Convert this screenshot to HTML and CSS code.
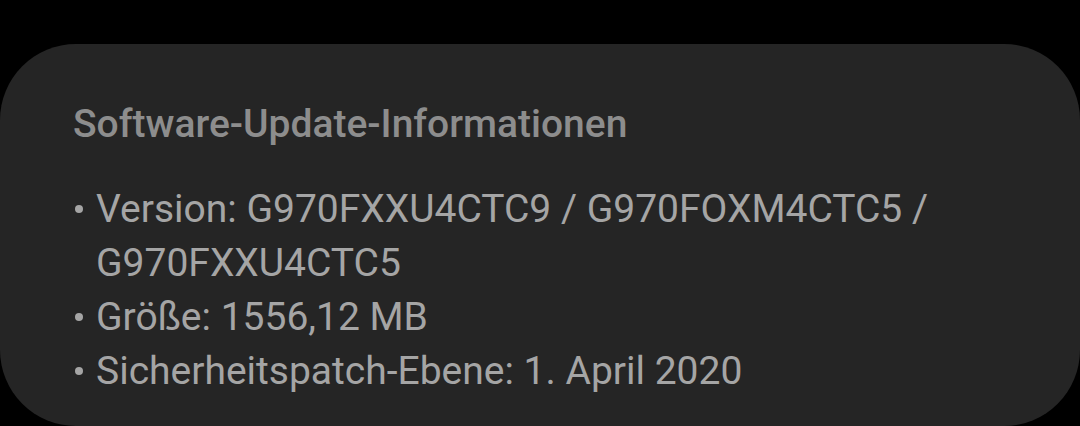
FILE: index.html
```html
<!DOCTYPE html>
<html lang="de">
<head>
<meta charset="utf-8">
<link rel="stylesheet" href="styles.css">
</head>
<body>
<div class="card">
  <h2 class="title">Software-Update-Informationen</h2>
  <ul class="list">
    <li>Version: G970FXXU4CTC9 / G970FOXM4CTC5 / G970FXXU4CTC5</li>
    <li>Größe: 1556,12 MB</li>
    <li>Sicherheitspatch-Ebene: 1. April 2020</li>
  </ul>
</div>
</body>
</html>
```
FILE: styles.css
```css
html, body {
  margin: 0;
  padding: 0;
  background: #000;
  width: 1080px;
  height: 426px;
  overflow: hidden;
}
.card {
  margin-top: 44px;
  background: #252525;
  border-radius: 76px;
  height: 382px;
  padding: 55px 60px 0 73px;
  box-sizing: border-box;
  font-family: Roboto, "Noto Sans", sans-serif;
}
.title {
  margin: 0;
  font-size: 39px;
  font-weight: 500;
  color: #8d8d8d;
  line-height: 50px;
}
.list {
  list-style: none;
  margin: 33px 0 0 0;
  padding: 0;
}
.list li {
  position: relative;
  padding-left: 23px;
  font-size: 39px;
  line-height: 54px;
  color: #a5a5a5;
}
.list li::before {
  content: "";
  position: absolute;
  left: 2px;
  top: 23px;
  width: 8px;
  height: 8px;
  border-radius: 50%;
  background: #a5a5a5;
}
```
